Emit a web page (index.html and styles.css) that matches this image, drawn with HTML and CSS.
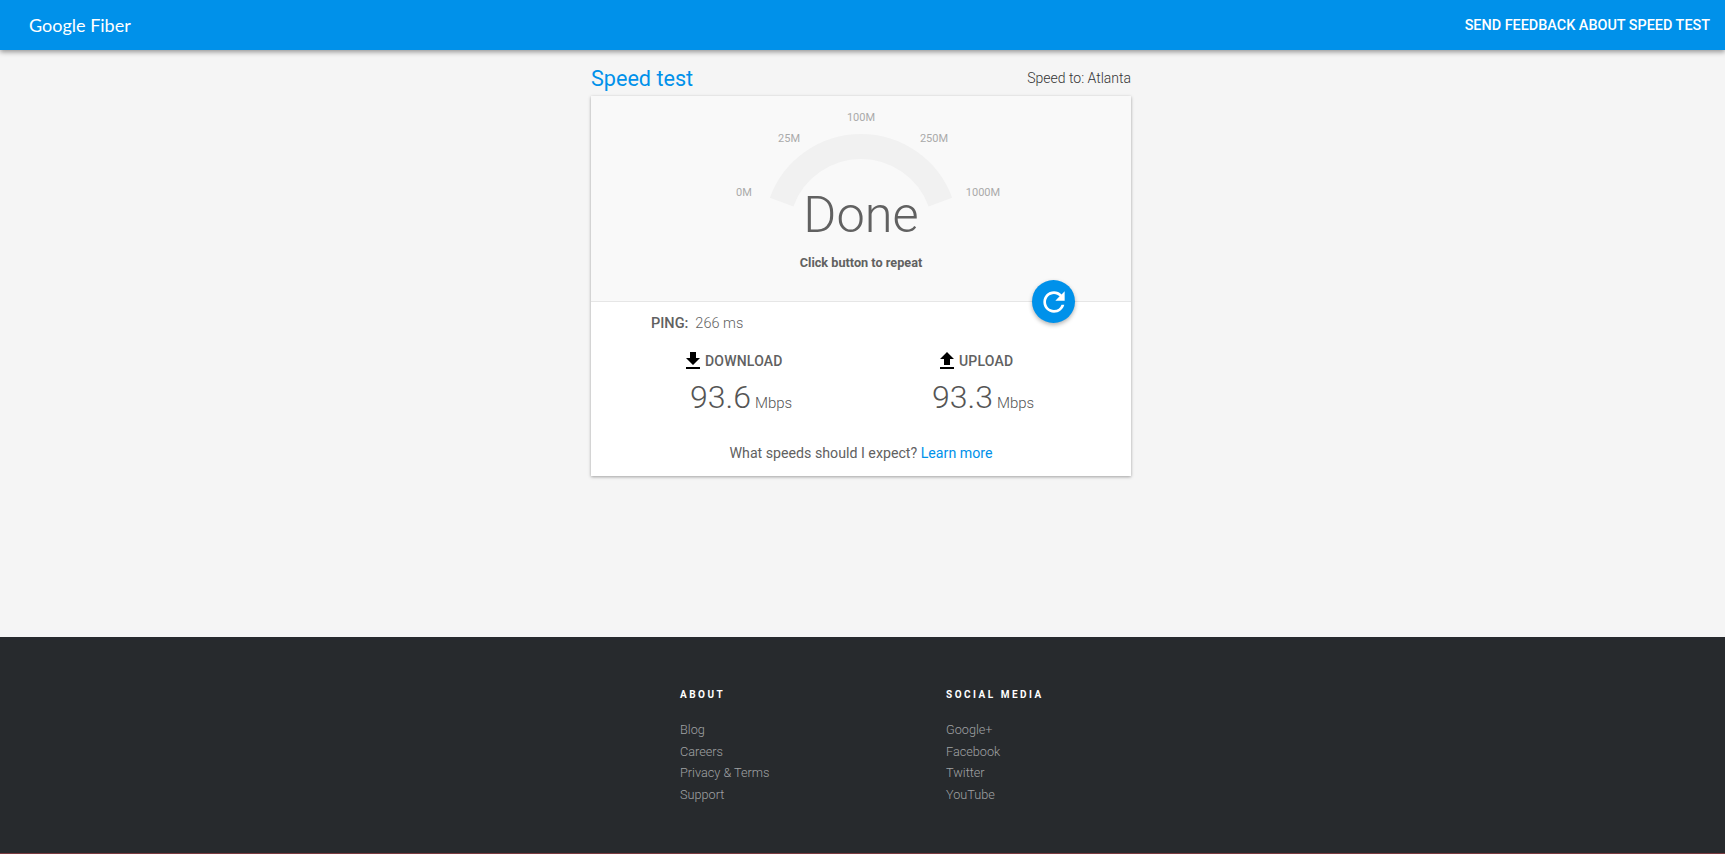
FILE: index.html
```html
<!DOCTYPE html>
<html lang="en">
<head>
<meta charset="utf-8">
<title>Speed test</title>
<link rel="stylesheet" href="styles.css">
</head>
<body>
<header class="topbar">
  <a class="logo">Google Fiber</a>
  <a class="feedback">SEND FEEDBACK ABOUT SPEED TEST</a>
</header>
<main class="main">
  <div class="column">
    <div class="title-row">
      <h1 class="title">Speed test</h1>
      <div class="server">Speed to: Atlanta</div>
    </div>
    <section class="card">
      <div class="gauge-panel">
        <div class="gauge">
          <svg class="arc" width="540" height="204" viewBox="0 0 540 204">
            <path d="M190.6 106.1 A84.5 84.5 0 0 1 349.4 106.1" fill="none" stroke="#f1f1f1" stroke-width="25"/>
          </svg>
          <span class="tick t100">100M</span>
          <span class="tick t25">25M</span>
          <span class="tick t250">250M</span>
          <span class="tick t0">0M</span>
          <span class="tick t1000">1000M</span>
          <div class="status">Done</div>
          <div class="hint">Click button to repeat</div>
        </div>
        <button class="fab" type="button" aria-label="Repeat">
          <svg width="32" height="32" viewBox="0 0 24 24"><path fill="#fff" d="M17.65 6.35A7.958 7.958 0 0 0 12 4c-4.42 0-7.99 3.58-7.99 8s3.57 8 7.99 8c3.73 0 6.84-2.55 7.73-6h-2.08A5.99 5.99 0 0 1 12 18c-3.31 0-6-2.69-6-6s2.69-6 6-6c1.66 0 3.14.69 4.22 1.78L13 11h7V4l-2.35 2.35z"/></svg>
        </button>
      </div>
      <div class="results">
        <div class="ping"><b>PING:</b><span>266 ms</span></div>
        <div class="stats">
          <div class="stat stat-down">
            <div class="stat-label">
              <svg width="24" height="24" viewBox="0 0 24 24"><path d="M19 9h-4V3H9v6H5l7 7 7-7zM5 18v2h14v-2H5z"/></svg>
              <span>DOWNLOAD</span>
            </div>
            <div class="stat-value">93.6<small>Mbps</small></div>
          </div>
          <div class="stat stat-up">
            <div class="stat-label">
              <svg width="24" height="24" viewBox="0 0 24 24"><path d="M9 16h6v-6h4l-7-7-7 7h4v6zm-4 2h14v2H5v-2z"/></svg>
              <span>UPLOAD</span>
            </div>
            <div class="stat-value">93.3<small>Mbps</small></div>
          </div>
        </div>
        <p class="expect">What speeds should I expect? <a>Learn more</a></p>
      </div>
    </section>
  </div>
</main>
<footer class="footer">
  <div class="foot-col">
    <h2>ABOUT</h2>
    <a>Blog</a>
    <a>Careers</a>
    <a>Privacy &amp; Terms</a>
    <a>Support</a>
  </div>
  <div class="foot-col">
    <h2>SOCIAL MEDIA</h2>
    <a>Google+</a>
    <a>Facebook</a>
    <a>Twitter</a>
    <a>YouTube</a>
  </div>
</footer>
</body>
</html>
```
FILE: styles.css
```css
* { box-sizing: border-box; }
html, body { margin: 0; height: 100%; }
body {
  display: flex;
  flex-direction: column;
  height: 854px;
  overflow: hidden;
  background: #f5f5f5;
  font-family: Roboto, "Liberation Sans", sans-serif;
  color: #616161;
}
.topbar {
  flex: 0 0 50px;
  display: flex;
  align-items: center;
  justify-content: space-between;
  padding: 0 15px 0 29px;
  background: #0091ea;
  color: #fff;
  box-shadow: 0 2px 5px rgba(0,0,0,.4);
  position: relative;
  z-index: 2;
}
.logo { font-family: Lato, sans-serif; font-size: 18px; font-weight: 400; line-height: 1; margin-top: -1px; }
.feedback { font-size: 14.4px; font-weight: 500; }
.main { flex: 1 1 auto; display: flex; justify-content: center; padding-right: 3px; }
.column { width: 540px; }
.title-row {
  height: 46px;
  padding-top: 10px;
  display: flex;
  align-items: center;
  justify-content: space-between;
}
.title { margin: 0; font-size: 21.6px; font-weight: 400; color: #0091ea; }
.server { font-size: 14px; color: #333; font-weight: 300; }
.card {
  background: #fff;
  box-shadow: 0 1px 3px rgba(0,0,0,.35);
}
.gauge-panel {
  position: relative;
  height: 206px;
  background: #f9f9f9;
  border-bottom: 1px solid #e6e6e6;
}
.gauge { position: relative; height: 204px; }
.arc { position: absolute; left: 0; top: 0; }
.tick {
  position: absolute;
  transform: translate(-50%, -50%);
  font-size: 11px;
  color: #aaa;
  line-height: 1;
}
.t100 { left: 270px; top: 21px; }
.t25 { left: 198px; top: 42px; }
.t250 { left: 343px; top: 42px; }
.t0 { left: 153px; top: 96px; }
.t1000 { left: 392px; top: 96px; }
.status {
  position: absolute;
  left: 0; right: 0; top: 91px;
  text-align: center;
  font-size: 50.5px;
  font-weight: 300;
  line-height: 56px;
}
.hint {
  position: absolute;
  left: 0; right: 0; top: 159px;
  text-align: center;
  font-size: 12.7px;
  font-weight: 700;
  line-height: 16px;
}
.fab {
  position: absolute;
  left: 441px;
  top: 184px;
  width: 43px;
  height: 43px;
  padding: 0;
  border: 0;
  border-radius: 50%;
  display: flex;
  align-items: center;
  justify-content: center;
  background: #0091ea;
  box-shadow: 0 2px 4px rgba(0,0,0,.3);
}
.results { height: 174px; padding-top: 12px; }
.ping {
  display: flex;
  gap: 7px;
  padding-left: 60px;
  font-size: 14.5px;
  line-height: 20px;
  font-weight: 300;
}
.ping b { font-weight: 500; }
.stats { display: flex; margin-top: 15px; padding-left: 90px; }
.stat { flex: 0 0 254px; }
.stat-label {
  display: flex;
  align-items: center;
  height: 24px;
  font-size: 14px;
  font-weight: 500;
  letter-spacing: .2px;
}
.stat-label svg { fill: #000; }
.stat-value {
  margin-top: 4px;
  padding-left: 9px;
  font-size: 32px;
  line-height: 40px;
  font-weight: 300;
  color: #555;
}
.stat-up .stat-value { padding-left: 0; margin-left: -3px; }
.stat-value small { font-size: 15px; margin-left: 4px; font-weight: 300; }
.expect {
  margin: 20px 0 0;
  text-align: center;
  font-size: 14.2px;
  line-height: 20px;
  font-weight: 400;
}
.expect a { color: #0091ea; font-weight: 400; }
.footer {
  flex: 0 0 217px;
  display: flex;
  padding: 51px 0 0 680px;
  background: #272a2d;
  border-bottom: 1px solid #7b3b40;
}
.foot-col { width: 266px; display: flex; flex-direction: column; align-items: flex-start; }
.foot-col h2 {
  margin: 0 0 17px;
  font-size: 10px;
  font-weight: 700;
  letter-spacing: 2.5px;
  line-height: 14px;
  color: #fff;
}
.foot-col a {
  font-size: 12.7px;
  font-weight: 300;
  line-height: 21.5px;
  color: #a0a2a4;
}
```
